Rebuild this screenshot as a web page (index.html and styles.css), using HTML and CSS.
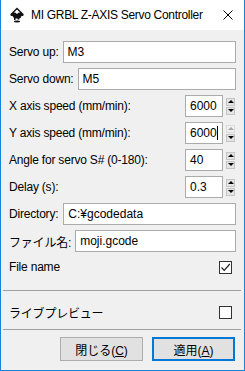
FILE: index.html
```
<!doctype html>
<html lang="ja">
<head>
	<meta charset="UTF-8">
	<title>MI GRBL Z-AXIS Servo Controller</title>
	<meta name="viewport" content="width=device-width, initial-scale=1.0">
	<link rel="stylesheet" href="styles.css">
</head>
<body>
	<div class="window">
		<div class="titlebar">
			<svg class="app-icon" width="16" height="16" viewBox="0 0 16 16">
				<path d="M8 0.5 L14.5 7 Q15.5 8.3 13.5 9 L2.5 9 Q0.5 8.3 1.5 7 Z" fill="#111"/>
				<path d="M8 2.5 L11.3 5.8 L9.8 5.4 L8 7 L6.2 5.4 L4.7 5.8 Z" fill="#fff"/>
				<path d="M3.5 9 H12.5 L11.5 11 H10.5 V12.5 H8.5 V11.5 H6.5 V13 H5 V11 Z" fill="#111"/>
				<ellipse cx="8" cy="14.6" rx="3.2" ry="1" fill="#111"/>
			</svg>
			<span class="title">MI GRBL Z-AXIS Servo Controller</span>
			<svg class="close" width="10" height="10" viewBox="0 0 10 10">
				<path d="M0.5 0.5 L9.5 9.5 M9.5 0.5 L0.5 9.5" stroke="#000" stroke-width="1"/>
			</svg>
		</div>
		<div class="content">
			<div class="rows">
				<div class="row">
					<span class="label">Servo up:</span>
					<div class="field">M3</div>
				</div>
				<div class="row">
					<span class="label">Servo down:</span>
					<div class="field">M5</div>
				</div>
				<div class="row">
					<span class="label grow">X axis speed (mm/min):</span>
					<div class="spin">
						<div class="field num">6000</div>
						<div class="arrows">
							<span class="arrow"><i class="tri up"></i></span>
							<span class="arrow"><i class="tri down"></i></span>
						</div>
					</div>
				</div>
				<div class="row">
					<span class="label grow">Y axis speed (mm/min):</span>
					<div class="spin">
						<div class="field num">6000<span class="caret"></span></div>
						<div class="arrows">
							<span class="arrow off"><i class="tri up"></i></span>
							<span class="arrow"><i class="tri down"></i></span>
						</div>
					</div>
				</div>
				<div class="row">
					<span class="label grow">Angle for servo S# (0-180):</span>
					<div class="spin">
						<div class="field num">40</div>
						<div class="arrows">
							<span class="arrow"><i class="tri up"></i></span>
							<span class="arrow"><i class="tri down"></i></span>
						</div>
					</div>
				</div>
				<div class="row">
					<span class="label grow">Delay (s):</span>
					<div class="spin">
						<div class="field num">0.3</div>
						<div class="arrows">
							<span class="arrow"><i class="tri up"></i></span>
							<span class="arrow"><i class="tri down"></i></span>
						</div>
					</div>
				</div>
				<div class="row">
					<span class="label">Directory:</span>
					<div class="field dir">C:¥gcodedata</div>
				</div>
				<div class="row">
					<span class="label">ファイル名:</span>
					<div class="field">moji.gcode</div>
				</div>
			</div>
			<div class="check-row first">
				<span class="label">File name</span>
				<span class="checkbox">
					<svg width="11" height="11" viewBox="0 0 11 11">
						<path d="M1.5 5.5 L4.2 8.3 L9.8 2" fill="none" stroke="#222" stroke-width="1.2"/>
					</svg>
				</span>
			</div>
			<div class="sep"></div>
			<div class="check-row live">
				<span class="label">ライブプレビュー</span>
				<span class="checkbox"></span>
			</div>
			<div class="sep last"></div>
			<div class="buttons">
				<button class="btn">閉じる(<u>C</u>)</button>
				<button class="btn default">適用(<u>A</u>)</button>
			</div>
		</div>
	</div>
</body>
</html>
```

FILE: styles.css
```
body{
	margin:0;
	padding:0;
	font-family:"Liberation Sans","Noto Sans CJK JP",sans-serif;
	font-size:12px;
	color:#000;
}
*{
	box-sizing:border-box;
}
.window{
	width:245px;
	height:371px;
	background:#f0f0f0;
	border:1px solid #1883d7;
	border-top:none;
	display:flex;
	flex-direction:column;
}
.titlebar{
	height:30px;
	background:#fff;
	display:flex;
	align-items:center;
	padding:0 0 0 8px;
}
.app-icon{
	margin-right:6px;
	margin-top:-1px;
}
.title{
	flex:1;
	font-size:12px;
	letter-spacing:-0.3px;
}
.close{
	margin-right:11px;
}
.content{
	flex:1;
	padding:11px 8px 0 8px;
	display:flex;
	flex-direction:column;
}
.rows{
	display:flex;
	flex-direction:column;
	gap:5px;
}
.row{
	display:flex;
	align-items:center;
	height:22px;
}
.label{
	white-space:nowrap;
	margin-right:4px;
	letter-spacing:-0.2px;
}
.grow{
	flex:1;
}
.field{
	flex:1;
	height:22px;
	background:#fff;
	border:1px solid #ababab;
	padding:0 4px;
	line-height:20px;
	display:flex;
	align-items:center;
	white-space:nowrap;
}
.field.dir{
	margin-left:1px;
}
.spin{
	display:flex;
	align-items:center;
	gap:3px;
	margin-right:1px;
}
.field.num{
	flex:none;
	width:38px;
}
.caret{
	display:inline-block;
	width:1px;
	height:14px;
	background:#000;
}
.arrows{
	display:flex;
	flex-direction:column;
	gap:1px;
	width:9px;
}
.arrow{
	height:8px;
	background:#e5e5e5;
	border:1px solid #c4c4c4;
	display:flex;
	align-items:center;
	justify-content:center;
}
.tri{
	width:0;
	height:0;
	border-left:3px solid transparent;
	border-right:3px solid transparent;
}
.tri.up{
	border-bottom:3px solid #000;
}
.tri.down{
	border-top:3px solid #000;
}
.arrow.off{
	background:#f0f0f0;
	border-color:#dcdcdc;
}
.arrow.off .tri.up{
	border-bottom-color:#a8a8a8;
}
.check-row{
	display:flex;
	align-items:center;
	justify-content:space-between;
	height:20px;
	padding-right:4px;
}
.check-row.first{
	margin-top:5px;
}
.check-row.live{
	margin-top:11px;
}
.checkbox{
	width:13px;
	height:13px;
	border:1px solid #333;
	background:#fff;
	display:flex;
	align-items:center;
	justify-content:center;
}
.sep{
	height:1px;
	background:#a0a0a0;
	margin:13px -5px 0 -6px;
}
.sep.last{
	margin-top:7px;
}
.buttons{
	display:flex;
	justify-content:flex-end;
	gap:9px;
	margin-top:7px;
	padding-right:1px;
}
.btn{
	width:83px;
	height:24px;
	background:#e1e1e1;
	border:1px solid #adadad;
	font-family:inherit;
	font-size:12px;
	color:#000;
	padding:0;
}
.btn u{
	text-decoration:underline;
}
.btn.default{
	border:2px solid #0078d7;
}
```
